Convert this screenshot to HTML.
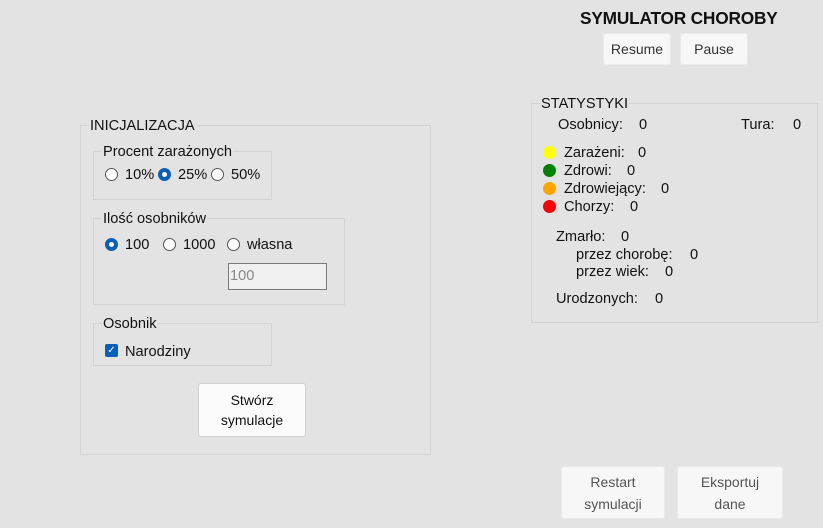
<!DOCTYPE html>
<html><head><meta charset="utf-8"><style>
*{margin:0;padding:0;box-sizing:border-box}
body{width:823px;height:528px;background:#e3e3e3;font-family:"Liberation Sans",sans-serif;font-size:14.6px;color:#111;position:relative;overflow:hidden}
.a{position:absolute;white-space:nowrap;line-height:16px;margin-top:1px}
.box{position:absolute;border:1px solid #d3d3d3}
.lbl{position:absolute;background:#e3e3e3;padding:0 1px;line-height:16px;white-space:nowrap;margin-top:1px}
.btn{position:absolute;background:#fbfbfb;border:1px solid #d0d0d0;border-radius:3px;text-align:center;display:flex;align-items:center;justify-content:center;line-height:23px;font-size:14px}
.dis{background:#f7f7f7;border-color:#e8e8e8;color:#555}
.r{position:absolute;width:13px;height:13px;border:1px solid #555;border-radius:50%;background:#fff}
.r.on{border:4px solid #0a5fb4;background:#fff}
.dot{position:absolute;width:13px;height:13px;border-radius:50%}
</style></head><body>
<div class="a" style="left:580px;top:8px;font-weight:bold;font-size:17.3px;line-height:18px;letter-spacing:-0.2px">SYMULATOR CHOROBY</div>
<div class="btn dis" style="left:603px;top:33px;width:68px;height:32px;color:#333;border-color:#eaeaea">Resume</div>
<div class="btn dis" style="left:680px;top:33px;width:68px;height:32px;color:#333;border-color:#eaeaea">Pause</div>

<div class="box" style="left:80px;top:125px;width:351px;height:330px"></div>
<div class="lbl" style="left:89px;top:117px">INICJALIZACJA</div>

<div class="box" style="left:93px;top:151px;width:179px;height:49px"></div>
<div class="lbl" style="left:102px;top:143px">Procent zarażonych</div>
<div class="r" style="left:105px;top:168px"></div><div class="a" style="left:125px;top:166px">10%</div>
<div class="r on" style="left:158px;top:168px"></div><div class="a" style="left:178px;top:166px">25%</div>
<div class="r" style="left:211px;top:168px"></div><div class="a" style="left:231px;top:166px">50%</div>

<div class="box" style="left:93px;top:218px;width:252px;height:87px"></div>
<div class="lbl" style="left:102px;top:210px">Ilość osobników</div>
<div class="r on" style="left:105px;top:238px"></div><div class="a" style="left:125px;top:236px">100</div>
<div class="r" style="left:163px;top:238px"></div><div class="a" style="left:183px;top:236px">1000</div>
<div class="r" style="left:227px;top:238px"></div><div class="a" style="left:247px;top:236px">własna</div>
<div style="position:absolute;left:228px;top:263px;width:99px;height:27px;border:1px solid #7a7a7a;background:#f0f0f0"></div>
<div class="a" style="left:230px;top:267px;color:#888">100</div>

<div class="box" style="left:93px;top:323px;width:179px;height:43px"></div>
<div class="lbl" style="left:102px;top:315px">Osobnik</div>
<div style="position:absolute;left:105px;top:344px;width:13px;height:13px;background:#0a5fb4;border-radius:2px;color:#fff;font-size:10px;line-height:13px;text-align:center">✓</div>
<div class="a" style="left:125px;top:343px">Narodziny</div>

<div class="btn" style="left:198px;top:383px;width:108px;height:54px;line-height:20px">Stwórz<br>symulacje</div>

<div class="box" style="left:531px;top:103px;width:287px;height:220px"></div>
<div class="lbl" style="left:540px;top:95px">STATYSTYKI</div>
<div class="a" style="left:558px;top:116px">Osobnicy:</div><div class="a" style="left:639px;top:116px">0</div>
<div class="a" style="left:741px;top:116px">Tura:</div><div class="a" style="left:793px;top:116px">0</div>
<div class="dot" style="left:543px;top:146px;background:#ffff00"></div><div class="a" style="left:564px;top:144px">Zarażeni:</div><div class="a" style="left:638px;top:144px">0</div>
<div class="dot" style="left:543px;top:164px;background:#008000"></div><div class="a" style="left:564px;top:162px">Zdrowi:</div><div class="a" style="left:627px;top:162px">0</div>
<div class="dot" style="left:543px;top:182px;background:#ffa500"></div><div class="a" style="left:564px;top:180px">Zdrowiejący:</div><div class="a" style="left:661px;top:180px">0</div>
<div class="dot" style="left:543px;top:200px;background:#ff0000"></div><div class="a" style="left:564px;top:198px">Chorzy:</div><div class="a" style="left:630px;top:198px">0</div>
<div class="a" style="left:556px;top:228px">Zmarło:</div><div class="a" style="left:621px;top:228px">0</div>
<div class="a" style="left:576px;top:246px">przez chorobę:</div><div class="a" style="left:690px;top:246px">0</div>
<div class="a" style="left:576px;top:263px">przez wiek:</div><div class="a" style="left:665px;top:263px">0</div>
<div class="a" style="left:556px;top:290px">Urodzonych:</div><div class="a" style="left:655px;top:290px">0</div>

<div class="btn dis" style="left:561px;top:466px;width:104px;height:53px;line-height:22px">Restart<br>symulacji</div>
<div class="btn dis" style="left:677px;top:466px;width:106px;height:53px;line-height:22px">Eksportuj<br>dane</div>
</body></html>
